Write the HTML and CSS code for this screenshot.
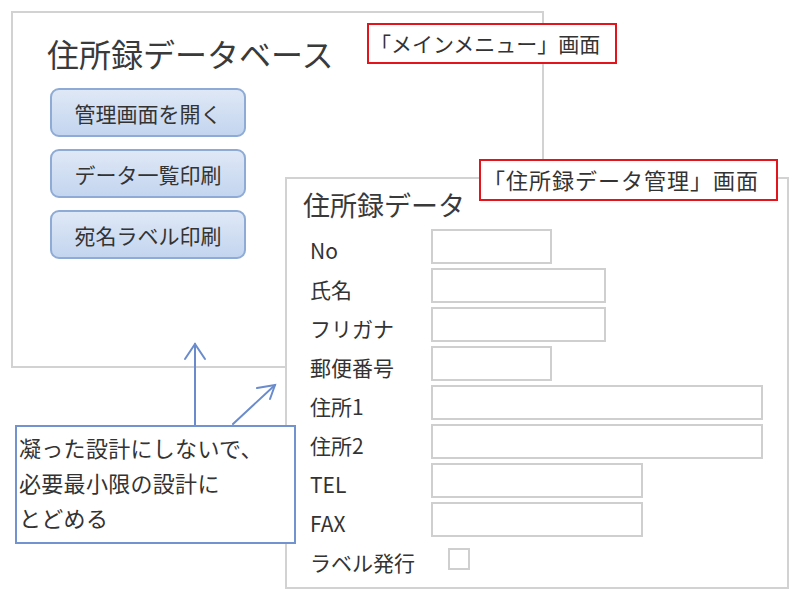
FILE: index.html
```html
<!DOCTYPE html>
<html lang="ja">
<head>
    <meta charset="UTF-8">
    <title>住所録データベース 画面設計</title>
    <link rel="stylesheet" href="styles.css">
</head>
<body>
    <div class="canvas">

        <!-- メインメニュー -->
        <div class="window menu-window">
            <h1 class="menu-title">住所録データベース</h1>
            <div class="menu-buttons">
                <div class="menu-btn">管理画面を開く</div>
                <div class="menu-btn">データ一覧印刷</div>
                <div class="menu-btn">宛名ラベル印刷</div>
            </div>
        </div>

        <!-- 住所録データ管理 -->
        <div class="window form-window">
            <h2 class="form-title">住所録データ</h2>
            <div class="form-grid">
                <div class="field-label">No</div>
                <div class="field"><div class="input w-s"></div></div>
                <div class="field-label">氏名</div>
                <div class="field"><div class="input w-m"></div></div>
                <div class="field-label">フリガナ</div>
                <div class="field"><div class="input w-m"></div></div>
                <div class="field-label">郵便番号</div>
                <div class="field"><div class="input w-s"></div></div>
                <div class="field-label">住所1</div>
                <div class="field"><div class="input w-l"></div></div>
                <div class="field-label">住所2</div>
                <div class="field"><div class="input w-l"></div></div>
                <div class="field-label">TEL</div>
                <div class="field"><div class="input w-t"></div></div>
                <div class="field-label">FAX</div>
                <div class="field"><div class="input w-t"></div></div>
                <div class="field-label">ラベル発行</div>
                <div class="field"><div class="checkbox"></div></div>
            </div>
        </div>

        <!-- 画面名ラベル -->
        <div class="tag tag-menu">「メインメニュー」画面</div>
        <div class="tag tag-form">「住所録データ管理」画面</div>

        <!-- 矢印 -->
        <svg class="arrows" width="800" height="600" viewBox="0 0 800 600">
            <g fill="none" stroke="#6a8ccc" stroke-width="2" stroke-linecap="round">
                <line x1="195" y1="425" x2="195" y2="344"/>
                <polyline points="185,359 195,344 205,359"/>
                <line x1="233" y1="424" x2="275" y2="385"/>
                <polyline points="257,388 275,385 270,399"/>
            </g>
        </svg>

        <!-- コメント -->
        <div class="note">凝った設計にしないで、<br>必要最小限の設計に<br>とどめる</div>
    </div>
</body>
</html>
```

FILE: styles.css
```css
/* General */
body {
    margin: 0;
    background: #fff;
    font-family: "Noto Sans CJK JP", "Noto Sans", sans-serif;
    color: #3a3a3a;
}

.canvas {
    position: relative;
    width: 800px;
    height: 600px;
    overflow: hidden;
}

.window {
    position: absolute;
    box-sizing: border-box;
    background: #fff;
    border: 2px solid #d2d2d2;
}

/* Main menu */
.menu-window {
    left: 11px;
    top: 11px;
    width: 533px;
    height: 357px;
    padding: 20px 37px;
}

.menu-title {
    margin: 0 0 0 -3px;
    font-size: 32px;
    font-weight: normal;
    line-height: 40px;
}

.menu-buttons {
    display: flex;
    flex-direction: column;
    gap: 12px;
    margin-top: 15px;
}

.menu-btn {
    box-sizing: border-box;
    width: 196px;
    height: 49px;
    border: 2px solid #8eabd6;
    border-radius: 9px;
    background: linear-gradient(#dfe8f6, #c3d5ef);
    display: flex;
    align-items: center;
    justify-content: center;
    font-size: 21px;
    color: #333;
}

/* Data form */
.form-window {
    left: 285px;
    top: 177px;
    width: 504px;
    height: 412px;
    padding: 10px 16px;
}

.form-title {
    margin: 0;
    font-size: 27px;
    font-weight: normal;
    line-height: 32px;
}

.form-grid {
    display: grid;
    grid-template-columns: 121px 1fr;
    grid-auto-rows: 39px;
    margin: 8px 0 0 7px;
}

.field-label {
    font-size: 21px;
    line-height: 26px;
    padding-top: 8px;
    color: #333;
    white-space: nowrap;
}

.input {
    box-sizing: border-box;
    height: 35px;
    border: 2px solid #cfcfcf;
    background: #fff;
}

.w-s { width: 121px; }
.w-m { width: 175px; }
.w-l { width: 332px; }
.w-t { width: 212px; }

.checkbox {
    box-sizing: border-box;
    width: 22px;
    height: 22px;
    margin: 7px 0 0 17px;
    border: 2px solid #cfcfcf;
}

/* Red screen tags */
.tag {
    position: absolute;
    box-sizing: border-box;
    background: #fff;
    border: 2px solid #e3141c;
    font-size: 21px;
    line-height: 36px;
    color: #333;
    white-space: nowrap;
}

.tag-menu {
    left: 367px;
    top: 23px;
    width: 250px;
    height: 41px;
    padding-left: 1px;
}

.tag-form {
    left: 479px;
    top: 159px;
    width: 299px;
    height: 42px;
    padding-left: 2px;
    font-size: 22px;
    letter-spacing: 1px;
}

/* Arrows and note */
.arrows {
    position: absolute;
    left: 0;
    top: 0;
}

.note {
    position: absolute;
    left: 15px;
    top: 425px;
    box-sizing: border-box;
    width: 281px;
    height: 119px;
    padding: 3px 0 0 2px;
    background: #fff;
    border: 2px solid #7193cf;
    font-size: 22px;
    line-height: 35px;
    color: #333;
    letter-spacing: 0.3px;
}
```
